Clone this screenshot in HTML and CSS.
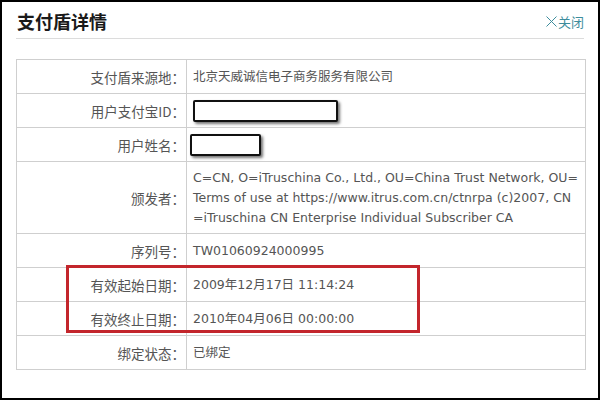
FILE: index.html
```html
<!DOCTYPE html>
<html lang="zh-CN">
<head>
<meta charset="UTF-8">
<title>支付盾详情</title>
<link rel="stylesheet" href="styles.css">
</head>
<body>
<div class="dialog">
  <div class="dialog-head">
    <h2>支付盾详情</h2>
    <a class="close" href="#"><svg width="11" height="11" viewBox="0 0 11 11"><path d="M0.5 0.5L10.5 10.5M10.5 0.5L0.5 10.5" stroke="#3d8c9c" stroke-width="1" fill="none"/></svg>关闭</a>
  </div>

  <div class="detail-wrap">
    <table class="detail">
      <tr><th>支付盾来源地：</th><td class="cn">北京天威诚信电子商务服务有限公司</td></tr>
      <tr><th>用户支付宝ID：</th><td><span class="mask mask-id"></span></td></tr>
      <tr><th>用户姓名：</th><td><span class="mask mask-name"></span></td></tr>
      <tr class="tall"><th>颁发者：</th><td>C=CN, O=iTruschina Co., Ltd., OU=China Trust Network, OU=<br>Terms of use at https://www.itrus.com.cn/ctnrpa (c)2007, CN<br>=iTruschina CN Enterprise Individual Subscriber CA</td></tr>
      <tr><th>序列号：</th><td>TW01060924000995</td></tr>
      <tr><th>有效起始日期：</th><td>2009年12月17日 11:14:24</td></tr>
      <tr><th>有效终止日期：</th><td>2010年04月06日 00:00:00</td></tr>
      <tr><th>绑定状态：</th><td class="cn">已绑定</td></tr>
    </table>
    <div class="mark"></div>
  </div>
</div>
</body>
</html>
```

FILE: styles.css
```css
* { box-sizing: border-box; }
body { margin: 0; background: #fff; font-family: "DejaVu Sans", "Noto Sans CJK SC", sans-serif; }
.dialog { width: 600px; height: 400px; border: 2px solid #000; padding: 0 14px 0 14px; }
.dialog-head { display: flex; justify-content: space-between; align-items: center; height: 37px; border-bottom: 1px solid #dcdcdc; }
.dialog-head h2 { margin: 0; padding: 2px 0 0 1px; font: bold 18px "Noto Sans CJK SC", sans-serif; color: #1a1a1a; }
.close { display: flex; align-items: center; gap: 1px; color: #3d8c9c; text-decoration: none; font: 13px "Noto Sans CJK SC", sans-serif; padding-top: 2px; }
.detail-wrap { position: relative; margin-top: 20px; }
.detail { width: 570px; border-collapse: collapse; table-layout: fixed; }
.detail th, .detail td { border: 1px solid #cfcfcf; height: 34px; padding: 0; }
.detail th { width: 170px; text-align: right; font: normal 13.5px "Noto Sans CJK SC", sans-serif; color: #555; padding-right: 1px; }
.detail td { padding-left: 6px; color: #555; font-size: 12.5px; line-height: 20px; white-space: nowrap; font-family: "DejaVu Sans", "Noto Sans CJK SC", sans-serif; }
.detail td.cn { font-size: 12.5px; }
.detail tr.tall td { height: 72px; }
.mask { display: inline-block; vertical-align: middle; height: 22px; background: #fff; border: 2px solid #111; border-radius: 2px; box-shadow: 2px 2px 3px rgba(0,0,0,.55); }
.mask-id { width: 145px; }
.mask-name { width: 71px; margin-left: -3px; }
.mark { position: absolute; left: 50px; top: 206px; width: 354px; height: 68px; border: 3px solid #c3262c; }
```
